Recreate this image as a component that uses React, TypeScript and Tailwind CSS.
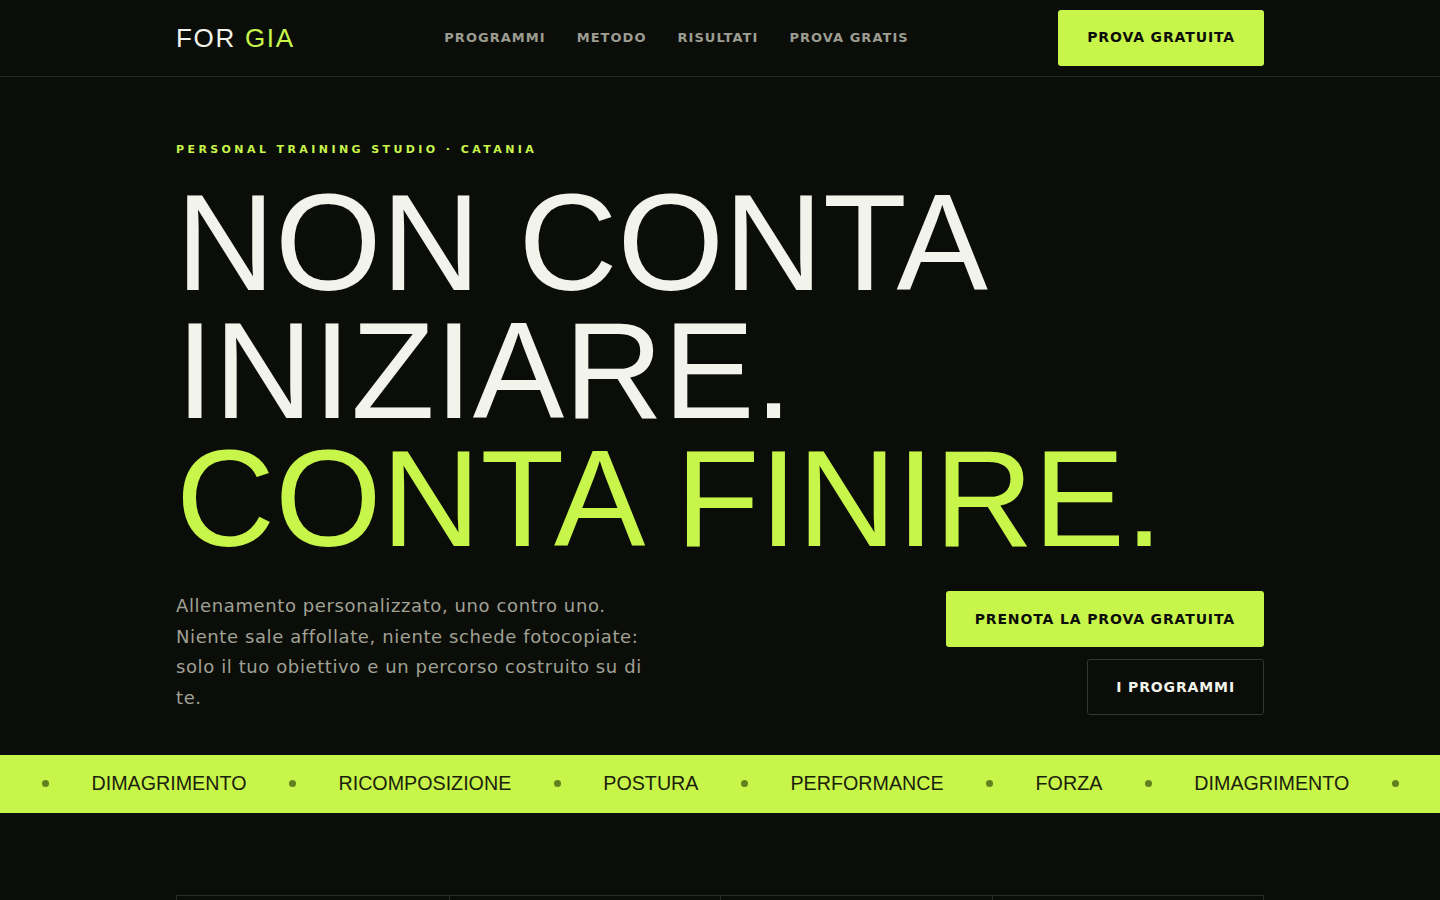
const nav = ["PROGRAMMI", "METODO", "RISULTATI", "PROVA GRATIS"];
const tags = ["DIMAGRIMENTO", "RICOMPOSIZIONE", "POSTURA", "PERFORMANCE", "FORZA", "DIMAGRIMENTO", "RICOMPOSIZIONE", "POSTURA"];

function Dot() {
  return <span className="block w-[7px] h-[7px] shrink-0 rounded-full bg-[#61801f]" />;
}

export default function App() {
  return (
    <div className="min-h-screen bg-[#0b0d09] text-[#f2f3ea] font-['DejaVu_Sans',sans-serif] overflow-hidden">
      {/* header */}
      <header className="border-b border-[#262822]">
        <div className="max-w-[1088px] mx-auto h-[76px] flex items-center justify-between">
          <a className="font-['Liberation_Sans',Arial,sans-serif] text-[26px] tracking-[0.065em] leading-none">
            FOR <span className="text-[#c8f54a]">GIA</span>
          </a>
          <nav className="flex items-center gap-[31px]">
            {nav.map((n) => (
              <a key={n} className="text-[13px] font-bold tracking-[0.08em] text-[#9c9d91]">
                {n}
              </a>
            ))}
          </nav>
          <button className="bg-[#c8f54a] text-[#0b0d09] rounded-[3px] px-[29px] h-[56px] text-[14px] font-bold tracking-[0.062em] -mt-[1px]">
            PROVA GRATUITA
          </button>
        </div>
      </header>

      {/* hero */}
      <section className="max-w-[1088px] mx-auto pt-[65px] pb-10">
        <p className="text-[11px] leading-[16px] font-bold tracking-[0.31em] text-[#c8f54a]">
          PERSONAL TRAINING STUDIO · CATANIA
        </p>
        <h1 className="mt-[21px] font-['Liberation_Sans',Arial,sans-serif] text-[137px] leading-[128px] font-normal">
          NON CONTA
          <br />
          INIZIARE.
          <br />
          <span className="text-[#c8f54a]">CONTA FINIRE.</span>
        </h1>
        <div className="mt-7 flex justify-between items-start">
          <p className="max-w-[472px] text-[18px] leading-[30.7px] tracking-[0.6px] text-[#a0a194]">
            Allenamento personalizzato, uno contro uno. Niente sale affollate, niente schede fotocopiate: solo il tuo
            obiettivo e un percorso costruito su di te.
          </p>
          <div className="flex flex-col items-end gap-3">
            <button className="bg-[#c8f54a] text-[#0b0d09] rounded-[3px] px-[29px] h-[56px] text-[14px] font-bold tracking-[0.062em]">
              PRENOTA LA PROVA GRATUITA
            </button>
            <button className="border border-[#34362f] text-[#f2f3ea] rounded-[3px] px-[28px] h-[56px] text-[14px] font-bold tracking-[0.062em]">
              I PROGRAMMI
            </button>
          </div>
        </div>
      </section>

      {/* marquee */}
      <div className="bg-[#c8f54a] h-[58px] flex items-center gap-[42.5px] pl-[42px] whitespace-nowrap font-['Liberation_Sans',Arial,sans-serif] text-[19.7px] text-[#1b220c]">
        {tags.map((t, i) => (
          <div key={i} className="flex items-center gap-[42.5px] shrink-0">
            <Dot />
            <span>{t}</span>
          </div>
        ))}
      </div>

      {/* stats */}
      <section className="max-w-[1088px] mx-auto pt-[82px] pb-20">
        <div className="grid grid-cols-4 border border-[#2a2c26]">
          {[0, 1, 2, 3].map((i) => (
            <div key={i} className={`h-[140px] ${i > 0 ? "border-l border-[#2a2c26]" : ""}`} />
          ))}
        </div>
      </section>
    </div>
  );
}
